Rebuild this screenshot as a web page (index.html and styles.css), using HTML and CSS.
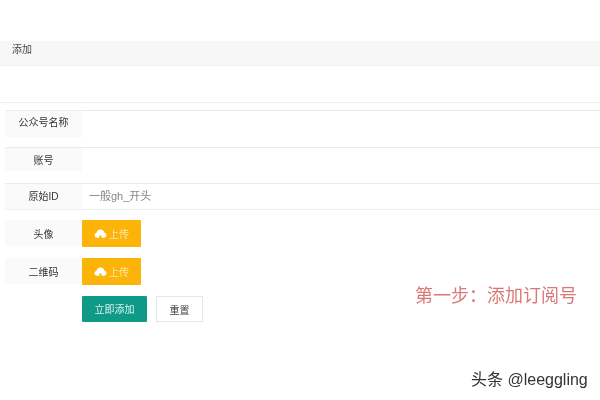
FILE: index.html
```html
<!DOCTYPE html>
<html lang="zh">
<head>
<meta charset="utf-8">
<title>添加</title>
<link rel="stylesheet" href="styles.css">
</head>
<body>
<div class="page">
  <div class="title">添加</div>
  <div class="tabs"></div>
  <form class="form">
    <div class="row line first"><label class="label">公众号名称</label><div class="field"></div></div>
    <div class="row line second"><label class="label">账号</label><div class="field"></div></div>
    <div class="row line third"><label class="label">原始ID</label><div class="field hint">一般gh_开头</div></div>
    <div class="row upload"><label class="label">头像</label><button type="button" class="btn-up"><svg class="cloud" viewBox="0 0 16 12"><path d="M3.500 11.500C1.500 11.500 0 10.200 0 8.300C0 6.700 1 5.500 2.600 5.200C3 2.300 5.300 0.500 8 0.500C10.700 0.500 13 2.300 13.400 5.200C15 5.500 16 6.700 16 8.300C16 10.200 14.500 11.500 12.500 11.500H9.500V8.500H6.500V11.500Z"/></svg>上传</button></div>
    <div class="row upload"><label class="label">二维码</label><button type="button" class="btn-up"><svg class="cloud" viewBox="0 0 16 12"><path d="M3.500 11.500C1.500 11.500 0 10.200 0 8.300C0 6.700 1 5.500 2.600 5.200C3 2.300 5.300 0.500 8 0.500C10.700 0.500 13 2.300 13.400 5.200C15 5.500 16 6.700 16 8.300C16 10.200 14.500 11.500 12.500 11.500H9.500V8.500H6.500V11.500Z"/></svg>上传</button></div>
    <div class="actions"><button type="button" class="btn-go">立即添加</button><button type="reset" class="btn-reset">重置</button></div>
  </form>
  <div class="note">第一步：添加订阅号</div>
  <div class="mark">头条 @leeggling</div>
</div>
</body>
</html>
```
FILE: styles.css
```css
* { box-sizing: border-box; }
html, body { margin: 0; padding: 0; background: #fff; }
.page {
  position: relative;
  width: 600px;
  height: 400px;
  overflow: hidden;
  padding-top: 41px;
  font-family: "Liberation Sans", "Noto Sans CJK SC", sans-serif;
  font-size: 10px;
  color: #444;
}
.title {
  height: 25px;
  padding-left: 12px;
  line-height: 17px;
  background: #f7f7f7;
  border-bottom: 1px solid #f0f0f0;
  filter: blur(0.5px);
}
.tabs { height: 37px; border-bottom: 1px solid #f0f0f0; }
.form { padding-left: 5px; filter: blur(0.5px); }
.row { display: flex; }
.line { border-top: 1px solid #ebebeb; }
.first { margin-top: 7px; height: 37px; }
.second { height: 36px; }
.third { height: 27px; border-bottom: 1px solid #f0f0f0; margin-bottom: 10px; }
.first .label { height: 26px; padding-bottom: 6px; }
.second .label { height: 23px; padding-bottom: 1px; }
.third .label { height: 25px; padding-bottom: 3px; }
.label {
  width: 77px;
  height: 26px;
  display: flex;
  align-items: center;
  justify-content: center;
  background: #fafafa;
  color: #333;
}
.field { flex: 1; }
.hint { padding-left: 7px; line-height: 25px; color: #888; font-size: 11px; }
.upload { height: 27px; margin-bottom: 11px; }
.upload:last-of-type { margin-bottom: 9px; }
.btn-up {
  width: 59px;
  height: 27px;
  padding: 0;
  border: 0;
  border-radius: 1px;
  background: #fdb408;
  color: #ffe9b0;
  font: inherit;
  display: flex;
  align-items: center;
  justify-content: center;
  gap: 2px;
}
.cloud { width: 13px; height: 9px; fill: #fff; }
.actions { display: flex; gap: 9px; padding-left: 77px; }
.btn-go {
  width: 65px;
  height: 26px;
  padding: 0 0 1px;
  border: 0;
  border-radius: 1px;
  background: #0f9a88;
  color: #d8f3ee;
  font: inherit;
}
.btn-reset {
  width: 47px;
  height: 26px;
  padding: 0;
  border: 1px solid #e6e6e6;
  background: #fff;
  color: #444;
  font: inherit;
}
.note {
  position: absolute;
  left: 415px;
  top: 284px;
  font-family: "Noto Sans CJK SC", sans-serif;
  font-size: 18px;
  line-height: 20px;
  color: #d97878;
  white-space: nowrap;
  filter: blur(0.5px);
}
.mark {
  position: absolute;
  left: 471px;
  top: 371px;
  font-size: 16px;
  line-height: 18px;
  color: #333;
  white-space: nowrap;
  filter: blur(0.3px);
}
```
